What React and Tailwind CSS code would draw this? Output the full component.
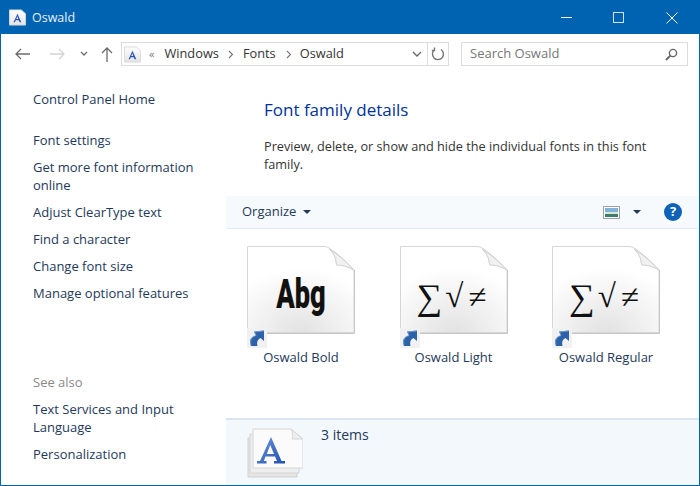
import React from "react";

function Shortcut() {
  return (
    <div className="absolute left-0 top-[82px] w-[20px] h-[20px] bg-[#f1f1f1]">
      <svg width="20" height="20" viewBox="0 0 20 20">
        <path d="M4 18 C2 13 3 9 9 7.5 L7 3.5 L17 2.5 L17 13 L13.500 10 C10.500 11.500 9.500 14 10.500 18 Z" fill="#2c62a8" />
        <path d="M4 17 C3 12 4 9 9 7.500 L7.500 4 L16.500 3" fill="none" stroke="#7fa6d6" strokeWidth="0.8" />
      </svg>
    </div>
  );
}

function Page({ id }) {
  return (
    <svg width="108" height="88" viewBox="0 0 108 88" className="absolute left-0 top-0">
      <defs>
        <radialGradient id={id} cx="50%" cy="100%" r="75%">
          <stop offset="0%" stopColor="#e2e2e2" />
          <stop offset="55%" stopColor="#f2f2f2" />
          <stop offset="100%" stopColor="#ffffff" />
        </radialGradient>
      </defs>
      <path d="M0.500 0.500 H78 C84 1 100 16 107 24 V86.500 H0.500 Z" fill={`url(#${id})`} stroke="#d6d6d6" />
      <path d="M82 3 C88 8 89 14 89.500 19 C96 19 102 21 106.500 24 C100 16 90 8 82 3 Z" fill="#f1f1f1" stroke="#d0d0d0" />
      <path d="M107.500 24 V87.500 H1" fill="none" stroke="#c6c6c6" />
    </svg>
  );
}

function FontItem({ label, bold, id }) {
  return (
    <div className="w-[152.5px] flex flex-col items-center shrink-0">
      <div className="relative w-[108px] h-[102px]">
        <Page id={id} />
        {bold ? (
          <div className="absolute left-0 right-0 top-[27px] text-center text-[40px] leading-[44px] font-black text-[#111] scale-x-[0.68] font-['Roboto',sans-serif]">
            Abg
          </div>
        ) : (
          <div className="absolute left-[17px] right-0 top-[29px] flex items-center text-[#111] font-['Liberation_Serif',serif]">
            <span className="text-[36px] leading-[44px]">∑</span>
            <span className="ml-[3px] text-[33px] leading-[44px] -mt-[3px]">√</span>
            <span className="ml-[5px] text-[33px] leading-[44px]">≠</span>
          </div>
        )}
        <Shortcut />
      </div>
      <div className="text-[13px] leading-[18px] text-[#1e395b]">{label}</div>
    </div>
  );
}

function SideLink({ children, className = "" }) {
  return <div className={`text-[13px] leading-[18px] text-[#1e395b] ${className}`}>{children}</div>;
}

function FontGlyphA({ size = 18, id }) {
  return (
    <svg width={size} height={size} viewBox="0 0 18 18">
      <defs>
        <linearGradient id={id} x1="0" y1="0" x2="0" y2="1">
          <stop offset="0%" stopColor="#ffffff" />
          <stop offset="100%" stopColor="#e4e4e4" />
        </linearGradient>
      </defs>
      <path d="M0.500 1 H13 L17.500 5 V17 H0.500 Z" fill={`url(#${id})`} stroke="#d9d9d9" />
      <path d="M9 5 L13 14 H11.200 L10.300 11.800 H7.200 L6.300 14 H4.800 Z M7.800 10.500 H9.800 L8.800 7.800 Z" fill="#2a55b5" fillRule="evenodd" />
    </svg>
  );
}

export default function App() {
  return (
    <div className="w-[700px] h-[486px] bg-white border border-[#0063b1] flex flex-col overflow-hidden font-['Open_Sans',sans-serif]">
      {/* title bar */}
      <div className="h-[33px] shrink-0 bg-[#0063b1] flex items-center pl-[8px] text-white">
        <FontGlyphA size={17} id="ga" />
        <span className="ml-[6px] mt-[1px] text-[12.5px] text-[#e8f1f9]">Oswald</span>
        <div className="ml-auto flex items-center mr-[4px]">
          <div className="w-[46px] h-[33px] mr-[6px] flex items-center justify-center">
            <div className="w-[11px] h-px bg-white" />
          </div>
          <div className="w-[46px] h-[33px] mr-[7.5px] flex items-center justify-center">
            <div className="w-[11px] h-[11px] border border-[#cfe2f3]" />
          </div>
          <div className="w-[46px] h-[33px] flex items-center justify-center">
            <svg width="12" height="12" viewBox="0 0 12 12" stroke="#fff" strokeWidth="1" fill="none">
              <path d="M0.500 0.500 L11.500 11.500 M11.500 0.500 L0.500 11.500" />
            </svg>
          </div>
        </div>
      </div>

      {/* nav bar */}
      <div className="h-[38px] shrink-0 flex items-center pt-[2px] pr-[11px] text-[#666]">
        <div className="w-[42px] flex justify-center">
          <svg width="15" height="12" viewBox="0 0 15 12" fill="none" stroke="#6b6b6b" strokeWidth="1.3"><path d="M15 6 H1 M6 1 L1 6 L6 11" /></svg>
        </div>
        <div className="w-[29px] flex justify-center">
          <svg width="15" height="12" viewBox="0 0 15 12" fill="none" stroke="#d4d4d4" strokeWidth="1.3"><path d="M0 6 H14 M9 1 L14 6 L9 11" /></svg>
        </div>
        <div className="w-[24px] flex justify-center">
          <svg width="8" height="6" viewBox="0 0 8 6" fill="none" stroke="#6b6b6b" strokeWidth="1.3"><path d="M1 1 L4 4 L7 1" /></svg>
        </div>
        <div className="w-[22px] flex justify-center">
          <svg width="12" height="15" viewBox="0 0 12 15" fill="none" stroke="#6b6b6b" strokeWidth="1.3"><path d="M6 15 V1 M1 6 L6 1 L11 6" /></svg>
        </div>
        <div className="ml-[3px] w-[328px] h-[24px] border border-[#dcdcdc] flex items-center text-[12.8px] text-[#333]">
          <div className="ml-[2px] flex"><FontGlyphA size={17} id="gb" /></div>
          <span className="ml-[8px] text-[#777] text-[11px]">«</span>
          <span className="ml-[10px]">Windows</span>
          <svg className="ml-[9px]" width="6" height="9" viewBox="0 0 6 9" fill="none" stroke="#777" strokeWidth="1.1"><path d="M1 1 L4.500 4.500 L1 8" /></svg>
          <span className="ml-[9px]">Fonts</span>
          <svg className="ml-[10px]" width="6" height="9" viewBox="0 0 6 9" fill="none" stroke="#777" strokeWidth="1.1"><path d="M1 1 L4.500 4.500 L1 8" /></svg>
          <span className="ml-[8px]">Oswald</span>
          <svg className="ml-auto mr-[5px]" width="10" height="6" viewBox="0 0 10 6" fill="none" stroke="#666" strokeWidth="1.3"><path d="M1 1 L5 5 L9 1" /></svg>
          <div className="w-[21px] h-full border-l border-[#dcdcdc] flex items-center justify-center">
            <svg width="14" height="14" viewBox="0 0 14 14" fill="none" stroke="#777" strokeWidth="1.4"><path d="M3.500 2.800 A5.500 5.500 0 1 0 10 2.500 M3.500 0.500 V3.500 H0.800" /></svg>
          </div>
        </div>
        <div className="ml-[12px] flex-1 h-[24px] border border-[#dcdcdc] flex items-center pl-[8px] pr-[9px] text-[13px] text-[#777]">
          <span>Search Oswald</span>
          <svg className="ml-auto" width="13" height="13" viewBox="0 0 13 13" fill="none" stroke="#666" strokeWidth="1.4"><circle cx="8" cy="5" r="3.600" /><path d="M5.400 7.600 L1 12" strokeWidth="1.900" /></svg>
        </div>
      </div>

      {/* body */}
      <div className="flex-1 flex min-h-0">
        <div className="w-[225px] shrink-0 pl-[32px] pr-[20px] pt-[18px]">
          <SideLink>Control Panel Home</SideLink>
          <SideLink className="mt-[23px]">Font settings</SideLink>
          <SideLink className="mt-[9px]">Get more font information online</SideLink>
          <SideLink className="mt-[9px]">Adjust ClearType text</SideLink>
          <SideLink className="mt-[9px]">Find a character</SideLink>
          <SideLink className="mt-[9px]">Change font size</SideLink>
          <SideLink className="mt-[9px]">Manage optional features</SideLink>
          <div className="mt-[71px] text-[13px] leading-[18px] text-[#8a8a8a]">See also</div>
          <SideLink className="mt-[9px]">Text Services and Input Language</SideLink>
          <SideLink className="mt-[9px]">Personalization</SideLink>
        </div>

        <div className="flex-1 min-w-0 flex flex-col">
          <div className="pl-[38px] pr-[30px] pt-[26px] h-[124px] shrink-0">
            <div className="text-[17px] leading-[24px] text-[#003399]">Font family details</div>
            <div className="mt-[15px] text-[12.7px] leading-[18px] text-[#333]">
              Preview, delete, or show and hide the individual fonts in this font family.
            </div>
          </div>
          <div className="h-[33px] shrink-0 bg-[#f7fafd] border-b border-[#e3ebf2] flex items-center pl-[16px] pr-[17px] text-[13px] text-[#1e395b]">
            <span>Organize</span>
            <svg className="ml-[7px]" width="8" height="4" viewBox="0 0 8 4"><path d="M0 0 H8 L4 4 Z" fill="#1e395b" /></svg>
            <svg className="ml-auto" width="17" height="13" viewBox="0 0 17 13">
              <rect x="0.500" y="0.500" width="16" height="12" fill="#fff" stroke="#a0a0a0" />
              <rect x="2" y="2" width="13" height="4" fill="#7fb3d8" />
              <rect x="2" y="6" width="13" height="2" fill="#d9e6d8" />
              <rect x="2" y="8" width="13" height="3" fill="#3f7d6a" />
            </svg>
            <svg className="ml-[13px]" width="8" height="4" viewBox="0 0 8 4"><path d="M0 0 H8 L4 4 Z" fill="#1e395b" /></svg>
            <div className="ml-[23px] w-[18px] h-[18px] rounded-full bg-[#0e62b8] text-white text-[13px] font-bold flex items-center justify-center">?</div>
          </div>
          <div className="flex-1 flex pt-[17px] -ml-[1.25px]">
            <FontItem label="Oswald Bold" bold id="p1" />
            <FontItem label="Oswald Light" id="p2" />
            <FontItem label="Oswald Regular" id="p3" />
          </div>
          <div className="h-[67px] shrink-0 bg-[#f3f8fc] border-t-2 border-[#d9e6f2] flex pl-[21px] pt-[5px] overflow-hidden">
            <svg width="56" height="52" viewBox="0 0 56 52" className="mt-[3px] shrink-0">
              <defs>
                <linearGradient id="ag" x1="0" y1="0" x2="1" y2="1">
                  <stop offset="0%" stopColor="#6f97dc" />
                  <stop offset="100%" stopColor="#1f4fb0" />
                </linearGradient>
              </defs>
              <path d="M1 10 H40 L50 18 V49 H1 Z" fill="#e6e6e6" stroke="#d0d0d0" />
              <path d="M3 6 H42 L52 14 V45 H3 Z" fill="#efefef" stroke="#d4d4d4" />
              <path d="M6 1 H44 L56 11 V40 H6 Z" fill="#fbfbfb" stroke="#d6d6d6" />
              <path d="M44 1 C46 5 46 8 45 11 H56 Z" fill="#eeeeee" stroke="#d6d6d6" />
              <path d="M24 9 L34.500 33 H38 V35.500 H27 V33 H30 L28 28.500 H18.500 L16.800 33 H19.500 V35.500 H10 V33 H13 Z M19.800 26 H27 L23.200 17 Z" fill="url(#ag)" fillRule="evenodd" />
            </svg>
            <div className="ml-[18px] text-[14px] leading-[20px] text-[#1e395b]">3 items</div>
          </div>
        </div>
      </div>
    </div>
  );
}
